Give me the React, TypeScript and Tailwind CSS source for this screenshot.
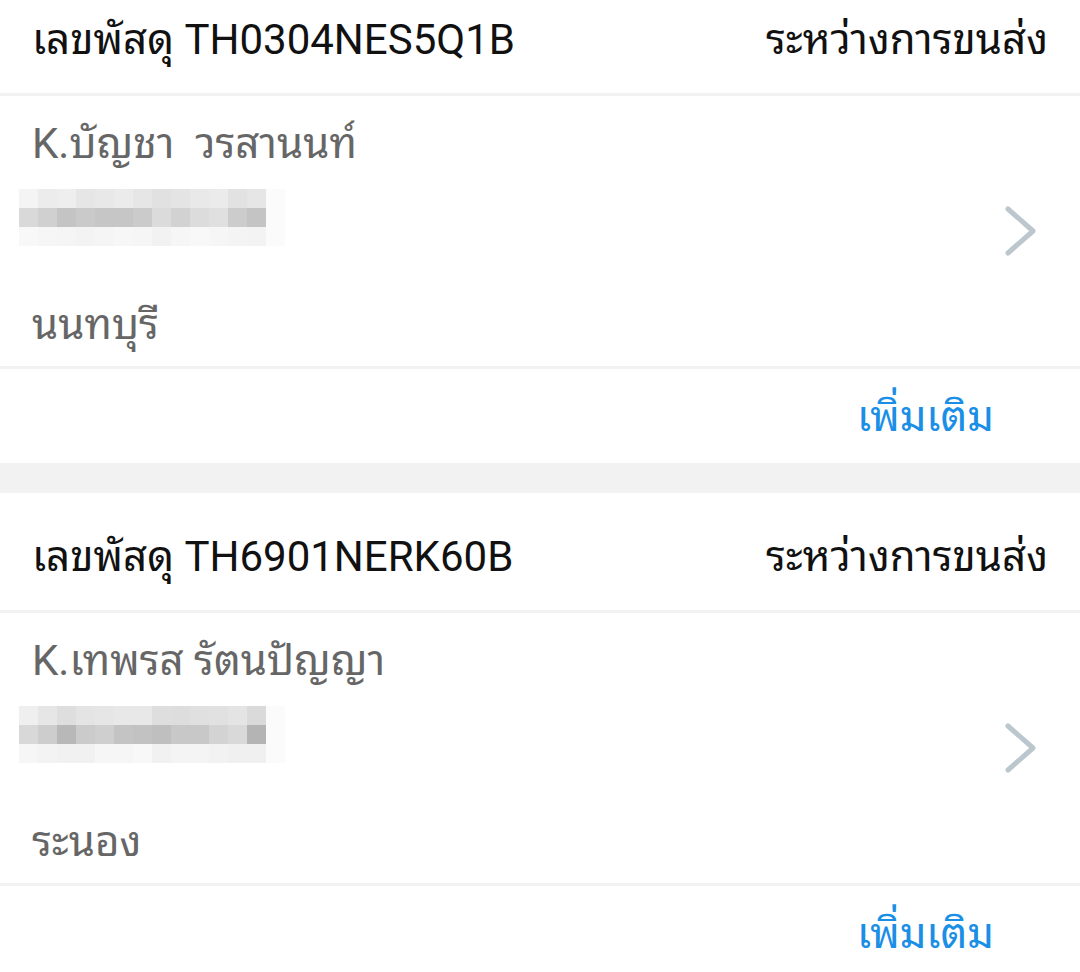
import React from "react";

type Parcel = {
  id: string;
  status: string;
  name: string;
  city: string;
  blur: string[][];
};

const parcels: Parcel[] = [
  {
    id: "TH0304NES5Q1B",
    status: "ระหว่างการขนส่ง",
    name: "K.บัญชา  วรสานนท์",
    city: "นนทบุรี",
    blur: [
      ["#f4f4f4", "#ececec", "#eeeeee", "#e6e6e6", "#e8e8e8", "#ebebeb", "#e6e6e6", "#e1e1e1", "#e4e4e4", "#e9e9e9", "#ebebeb", "#e2e2e2", "#e6e6e6"],
      ["#d9d9d9", "#d0d0d0", "#c4c4c4", "#cacaca", "#c6c6c6", "#c6c6c6", "#cbcbcb", "#dbdbdb", "#d2d2d2", "#dcdcdc", "#e0e0e0", "#cccccc", "#c4c4c4"],
      ["#f8f8f8", "#f6f6f6", "#f5f5f5", "#f3f3f3", "#f5f5f5", "#f7f7f7", "#f6f6f6", "#f2f2f2", "#f6f6f6", "#f8f8f8", "#f6f6f6", "#f4f4f4", "#f3f3f3"],
    ],
  },
  {
    id: "TH6901NERK60B",
    status: "ระหว่างการขนส่ง",
    name: "K.เทพรส รัตนปัญญา",
    city: "ระนอง",
    blur: [
      ["#efefef", "#e6e6e6", "#dedede", "#e4e4e4", "#e6e6e6", "#e8e8e8", "#e8e8e8", "#dedede", "#dddddd", "#e0e0e0", "#e1e1e1", "#e4e4e4", "#dadada"],
      ["#d8d8d8", "#cdcdcd", "#b8b8b8", "#cbcbcb", "#cfcfcf", "#c4c4c4", "#c2c2c2", "#bfbfbf", "#c8c8c8", "#c8c8c8", "#d3d3d3", "#d9d9d9", "#b4b4b4"],
      ["#f6f6f6", "#f3f3f3", "#f1f1f1", "#f1f1f1", "#f6f6f6", "#f6f6f6", "#f8f8f8", "#f1f1f1", "#f4f4f4", "#f4f4f4", "#f2f2f2", "#f0f0f0", "#f0f0f0"],
    ],
  },
];

function Chevron() {
  return (
    <svg width="36" height="52" viewBox="0 0 36 52" fill="none">
      <path
        d="M6 4 L31 26 L6 48"
        stroke="#bcc6cd"
        strokeWidth="5"
        strokeLinecap="round"
        strokeLinejoin="round"
      />
    </svg>
  );
}

function Blur({ rows }: { rows: string[][] }) {
  return (
    <div className="flex flex-col pl-[19px]">
      {rows.map((row, ri) => (
        <div key={ri} className="flex h-[19px]">
          {row.map((c, ci) => (
            <div key={ci} className="w-[19px] h-full" style={{ backgroundColor: c }} />
          ))}
          <div className="w-[19px] h-full bg-[#fbfbfb]" />
        </div>
      ))}
    </div>
  );
}

function Card({ p }: { p: Parcel }) {
  return (
    <div className="bg-white">
      <div className="h-[120px] box-border pt-[10px] flex items-center justify-between pl-[32px] pr-[32px] text-[42px] text-[#111111] border-b-[3px] border-[#f2f2f2]">
        <span>เลขพัสดุ {p.id}</span>
        <span>{p.status}</span>
      </div>
      <div className="h-[273px] box-border flex items-center pr-[42px] border-b-[3px] border-[#f2f2f2]">
        <div className="flex-1 flex flex-col h-full">
          <div className="pt-[24px] pl-[32px] text-[42px] leading-[48px] text-[#666666] whitespace-pre">
            {p.name}
          </div>
          <div className="mt-[21px]">
            <Blur rows={p.blur} />
          </div>
          <div className="mt-[55px] pl-[32px] text-[42px] leading-[48px] text-[#666666]">
            {p.city}
          </div>
        </div>
        <Chevron />
      </div>
      <div className="h-[94px] flex items-center justify-end pr-[86px] text-[42px] text-[#1b8fe6]">
        เพิ่มเติม
      </div>
    </div>
  );
}

export default function App() {
  return (
    <div
      className="w-[1080px] h-[972px] overflow-hidden bg-[#f2f2f2]"
      style={{ fontFamily: 'Roboto, "Noto Sans Thai Looped", "Noto Sans Thai", "Noto Sans", "DejaVu Sans", sans-serif' }}
    >
      <div className="-mt-[24px] flex flex-col gap-[30px]">
        {parcels.map((p) => (
          <Card key={p.id} p={p} />
        ))}
      </div>
    </div>
  );
}
